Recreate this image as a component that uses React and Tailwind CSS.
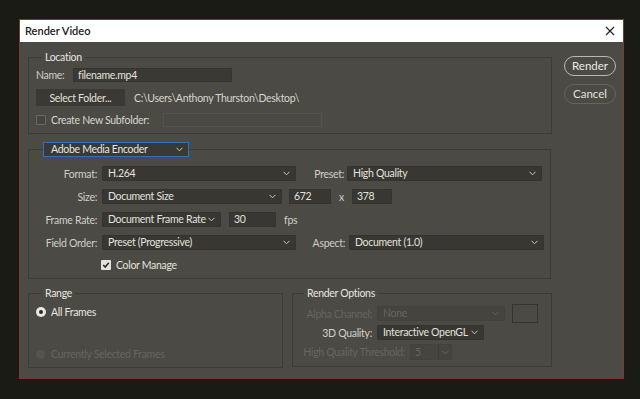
import React from 'react';

// Small chevron used by every dropdown
const Chevron = ({ className = '' }) => (
  <svg width="7" height="5" viewBox="0 0 7 5" className={`shrink-0 ${className}`}>
    <path d="M0.5 0.8 L3.5 3.8 L6.5 0.8" fill="none" stroke="currentColor" strokeWidth="1" />
  </svg>
);

const Select = ({ className = '', disabled, children }) => (
  <div
    className={`flex items-center justify-between h-[15px] rounded-[1px] border pl-[5px] pr-[5px] ${
      disabled ? 'bg-[#45443f] border-[#42413d] text-[#67665f]' : 'bg-[#383733] border-[#34332f] text-[#e2e2dc]'
    } ${className}`}
  >
    <span className="leading-[13px] whitespace-nowrap">{children}</span>
    <Chevron className={disabled ? 'text-[#67665f]' : 'text-[#c9c9c2]'} />
  </div>
);

const TextBox = ({ className = '', children }) => (
  <div className={`flex items-center h-[15px] bg-[#383733] border border-[#34332f] pl-[4px] text-[#e2e2dc] ${className}`}>
    <span className="leading-[13px]">{children}</span>
  </div>
);

const Group = ({ legend, legendClass = 'ml-[13px]', className = '', children }) => (
  <fieldset className={`border border-[#3c3b37] ${className}`}>
    {typeof legend === 'string' ? (
      <legend className={`${legendClass} px-[3px] leading-[14px] text-[#e6e6e0]`}>{legend}</legend>
    ) : (
      legend
    )}
    {children}
  </fieldset>
);

const Label = ({ className = '', disabled, children }) => (
  <div className={`text-right whitespace-nowrap ${disabled ? 'text-[#67665f]' : 'text-[#cfcfc8]'} ${className}`}>
    {children}
  </div>
);

export default function App() {
  return (
    <div className="min-h-screen bg-[#1b1b16] pt-[19px] pl-[19px] font-[Lato,'Liberation_Sans',sans-serif] text-[10.5px] tracking-[-0.3px] leading-[14px]">
      <div className="w-[605px] h-[360px] border border-[#7b3a2c] bg-[#4b4a45] flex flex-col">
        {/* title bar */}
        <div className="h-[22px] bg-white flex items-center justify-between pl-[5px] pr-[8px] shrink-0">
          <span className="text-[#1a1a1a] font-semibold text-[11px] tracking-normal">Render Video</span>
          <svg width="10" height="10" viewBox="0 0 10 10">
            <path d="M1 1 L9 9 M9 1 L1 9" stroke="#222" strokeWidth="1.2" />
          </svg>
        </div>

        <div className="flex flex-1">
          <div className="ml-[8px] w-[524px] flex flex-col">
            {/* Location */}
            <Group legend="Location" className="mt-[8px] h-[84px]">
              <div className="flex flex-col gap-[7px] mt-[4px] px-[7px]">
                <div className="flex items-center h-[14px]">
                  <span className="w-[37px] text-[#cfcfc8]">Name:</span>
                  <div className="w-[159px] h-[14px] bg-[#3a3935] border border-[#35342f] pl-[4px] flex items-center text-[#e2e2dc]">
                    filename.mp4
                  </div>
                </div>
                <div className="flex items-center gap-[9px]">
                  <div className="w-[89px] h-[17px] bg-[#3a3935] flex items-center justify-center text-[#e2e2dc]">
                    Select Folder...
                  </div>
                  <span className="text-[#d6d6cf]">C:\Users\Anthony Thurston\Desktop\</span>
                </div>
                <div className="flex items-center h-[14px]">
                  <div className="w-[10px] h-[10px] border border-[#6a6964] bg-[#45443f] rounded-[1px]" />
                  <span className="ml-[5px] w-[112px] text-[#d6d6cf]">Create New Subfolder:</span>
                  <div className="w-[159px] h-[14px] border border-[#55544f] bg-[#4a4944]" />
                </div>
              </div>
            </Group>

            {/* Encoder */}
            <Group
              className="mt-[8px] w-[523px] h-[137px]"
              legend={
                <legend className="ml-[14px]">
                  <div className="w-[146px] h-[15px] border border-[#2f6fc4] bg-[#3a3935] flex items-center justify-between pl-[7px] pr-[5px] text-[#e6e6e0]">
                    <span className="leading-[13px]">Adobe Media Encoder</span>
                    <Chevron className="text-[#c9c9c2]" />
                  </div>
                </legend>
              }
            >
              <div className="flex flex-col gap-[8px] mt-[9px]">
                <div className="flex items-center h-[15px]">
                  <Label className="w-[68px]">Format:</Label>
                  <Select className="ml-[5px] w-[194px]">H.264</Select>
                  <Label className="w-[48px]">Preset:</Label>
                  <Select className="ml-[3px] w-[195px]">High Quality</Select>
                </div>
                <div className="flex items-center h-[15px]">
                  <Label className="w-[68px]">Size:</Label>
                  <Select className="ml-[5px] w-[180px]">Document Size</Select>
                  <TextBox className="ml-[7px] w-[42px]">672</TextBox>
                  <span className="w-[21px] text-center text-[#cfcfc8]">x</span>
                  <TextBox className="w-[40px]">378</TextBox>
                </div>
                <div className="flex items-center h-[15px]">
                  <Label className="w-[68px]">Frame Rate:</Label>
                  <Select className="ml-[5px] w-[119px]">Document Frame Rate</Select>
                  <TextBox className="ml-[8px] w-[47px]">30</TextBox>
                  <span className="ml-[8px] text-[#cfcfc8]">fps</span>
                </div>
                <div className="flex items-center h-[15px]">
                  <Label className="w-[68px]">Field Order:</Label>
                  <Select className="ml-[5px] w-[194px]">Preset (Progressive)</Select>
                  <Label className="w-[49px]">Aspect:</Label>
                  <Select className="ml-[4px] w-[195px]">Document (1.0)</Select>
                </div>
                <div className="flex items-center h-[14px] ml-[72px]">
                  <div className="w-[10px] h-[10px] bg-[#e4e4de] rounded-[1px] flex items-center justify-center">
                    <svg width="8" height="8" viewBox="0 0 8 8">
                      <path d="M1.2 4 L3.2 6 L6.8 1.8" fill="none" stroke="#2b2a27" strokeWidth="1.6" />
                    </svg>
                  </div>
                  <span className="ml-[5px] text-[#e2e2dc]">Color Manage</span>
                </div>
              </div>
            </Group>

            <div className="flex mt-[7px] gap-[9px]">
              {/* Range */}
              <Group legend="Range" className="w-[255px] h-[82px]">
                <div className="px-[7px]">
                  <div className="flex items-center h-[14px] mt-[5px]">
                    <div className="w-[10px] h-[10px] rounded-full bg-[#e8e8e2] flex items-center justify-center">
                      <div className="w-[4px] h-[4px] rounded-full bg-[#2b2a27]" />
                    </div>
                    <span className="ml-[5px] text-[#e6e6e0]">All Frames</span>
                  </div>
                  <div className="flex items-center h-[14px] mt-[28px]">
                    <div className="w-[9px] h-[9px] rounded-full bg-[#55544f]" />
                    <span className="ml-[6px] text-[#67665f]">Currently Selected Frames</span>
                  </div>
                </div>
              </Group>

              {/* Render options */}
              <Group legend="Render Options" legendClass="ml-[11px]" className="w-[260px] h-[81px]">
                <div className="flex flex-col mt-[4px]">
                  <div className="flex items-center h-[19px]">
                    <Label disabled className="w-[79px]">Alpha Channel:</Label>
                    <Select disabled className="ml-[5px] w-[128px]">None</Select>
                    <div className="ml-[7px] w-[26px] h-[19px] border border-[#353430]" />
                  </div>
                  <div className="flex items-center h-[15px] mt-[2px]">
                    <Label className="w-[79px]">3D Quality:</Label>
                    <Select className="ml-[5px] w-[107px]">Interactive OpenGL</Select>
                  </div>
                  <div className="flex items-center h-[16px] mt-[4px]">
                    <Label disabled className="w-[112px]">High Quality Threshold:</Label>
                    <div className="ml-[5px] w-[42px] h-[16px] flex bg-[#45443f] border border-[#42413d] text-[#67665f]">
                      <span className="pl-[4px] flex-1 leading-[14px]">5</span>
                      <div className="w-[13px] border-l border-[#3d3c38] flex items-center justify-center">
                        <Chevron />
                      </div>
                    </div>
                  </div>
                </div>
              </Group>
            </div>
          </div>

          {/* buttons */}
          <div className="ml-[12px] mt-[14px] flex flex-col gap-[8px]">
            <div className="w-[52px] h-[20px] rounded-full border-[1.5px] border-[#b9b9b2] flex items-center justify-center text-[#ecece6] text-[11.5px] tracking-normal">
              Render
            </div>
            <div className="w-[52px] h-[20px] rounded-full border-[1.5px] border-[#66655f] flex items-center justify-center text-[#e2e2dc] text-[11.5px] tracking-normal">
              Cancel
            </div>
          </div>
        </div>
      </div>
    </div>
  );
}
